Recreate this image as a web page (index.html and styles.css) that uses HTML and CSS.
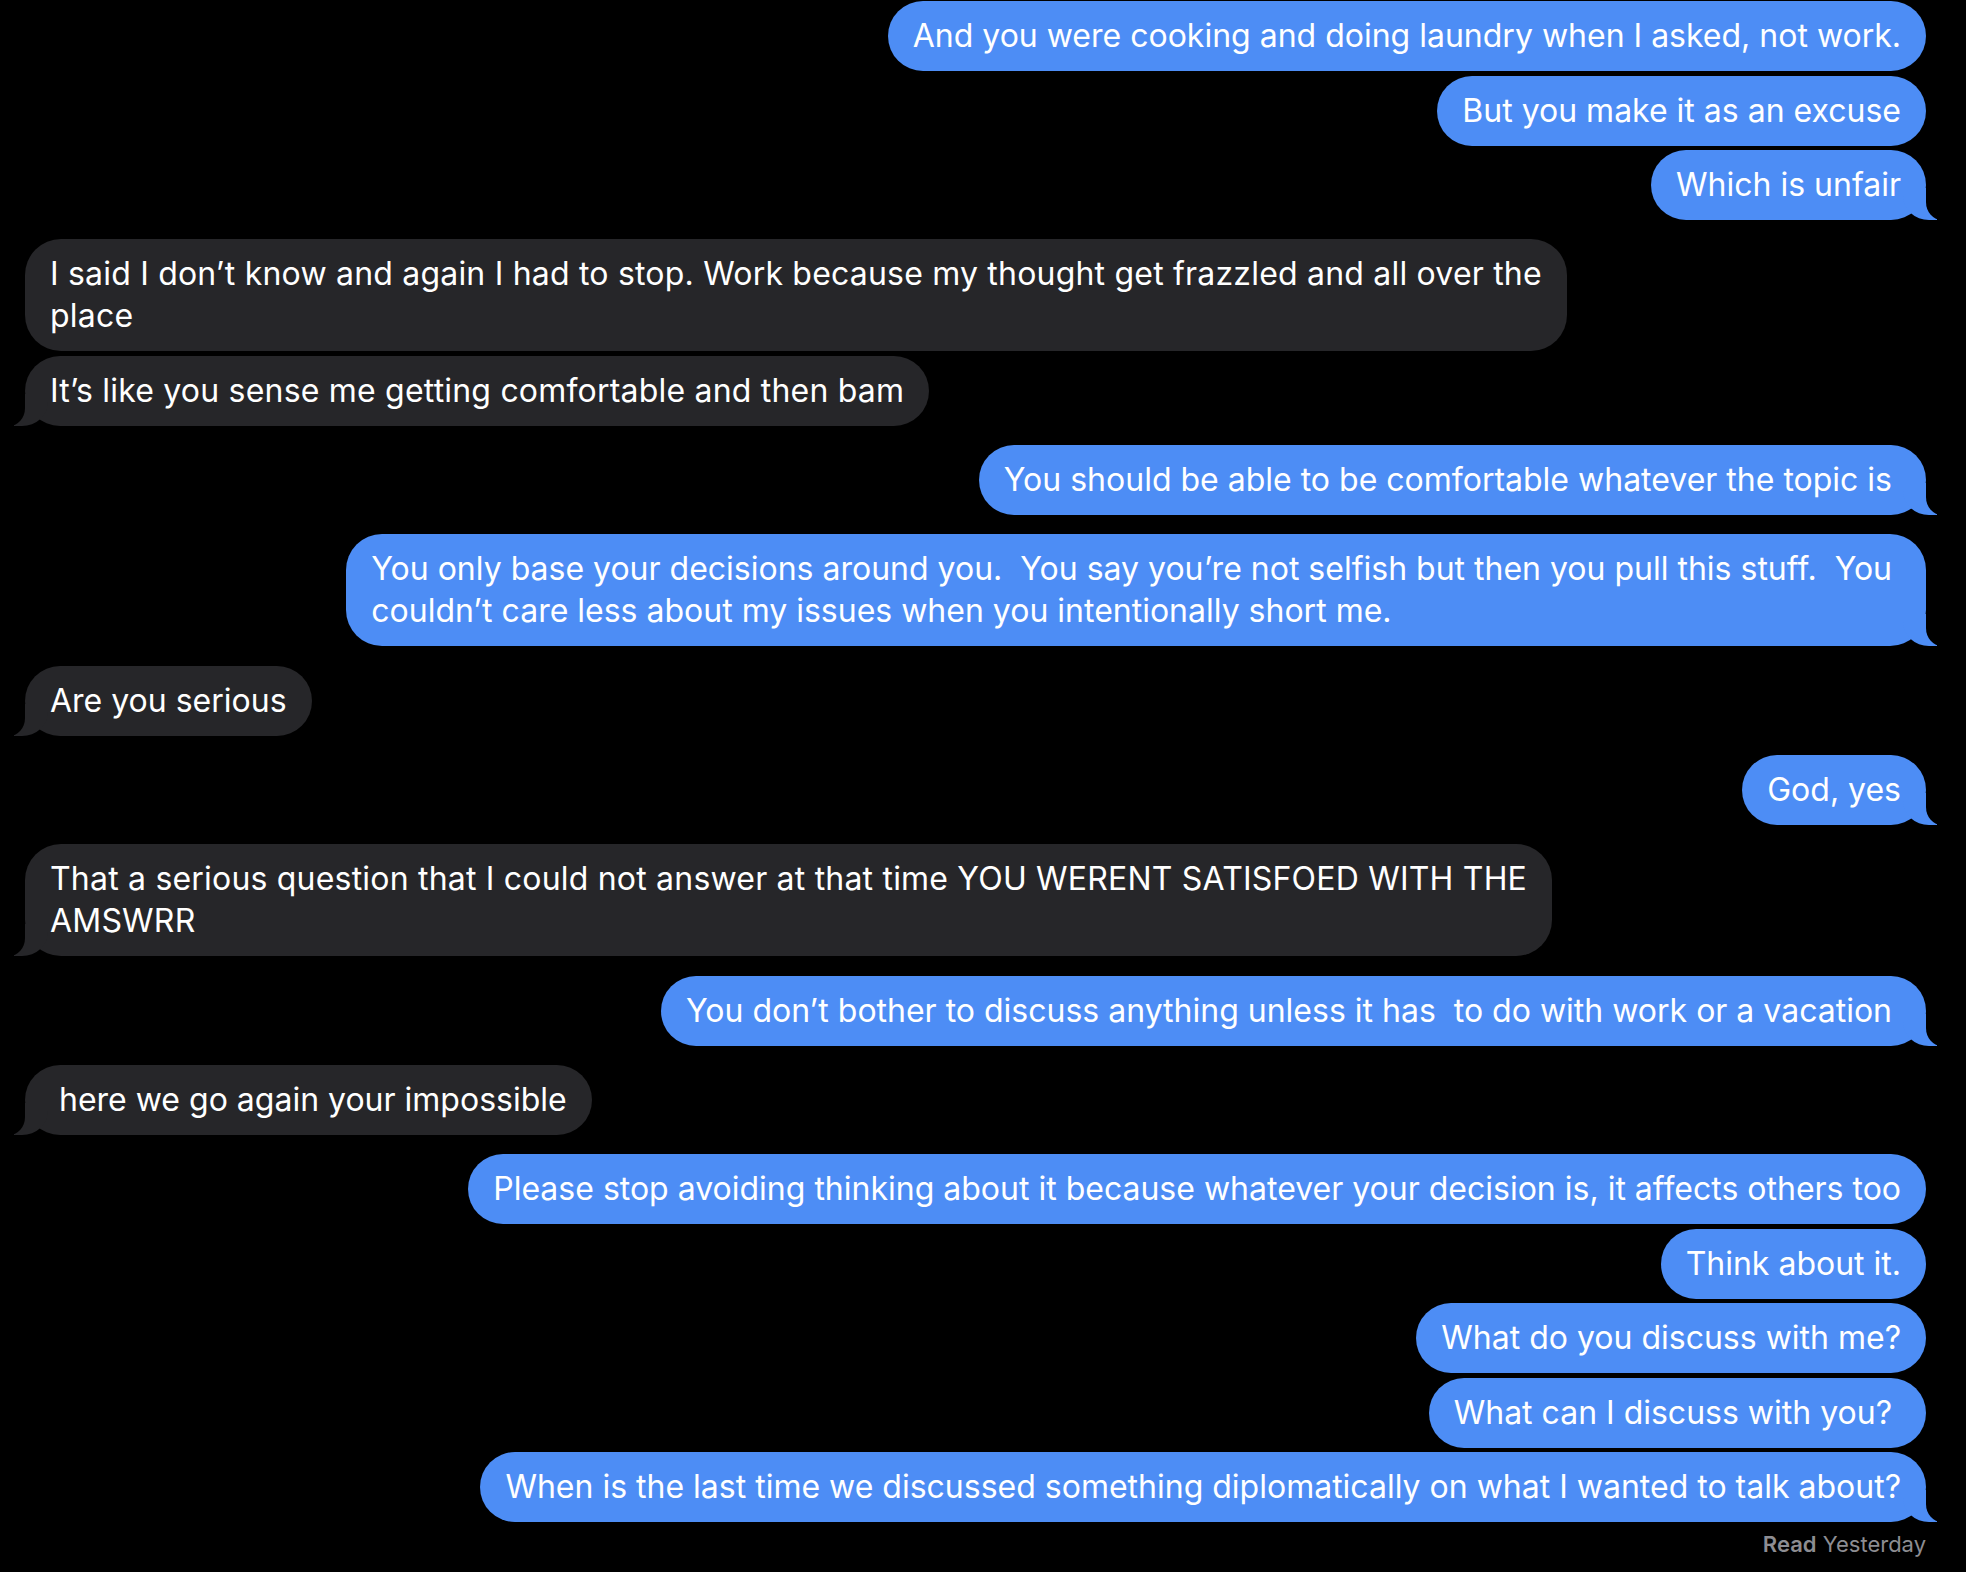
FILE: index.html
```html
<!DOCTYPE html>
<html>
<head>
<meta charset="utf-8">
<link rel="stylesheet" href="styles.css">
</head>
<body>
<main class="thread">
  <section class="group sent">
    <p class="bubble">And you were cooking and doing laundry when I asked, not work.</p>
    <p class="bubble">But you make it as an excuse</p>
    <p class="bubble tail">Which is unfair</p>
  </section>
  <section class="group recv">
    <p class="bubble wide">I said I don’t know and again I had to stop. Work because my thought get frazzled and all over the<br>place</p>
    <p class="bubble wide tail">It’s like you sense me getting comfortable and then bam</p>
  </section>
  <section class="group sent">
    <p class="bubble tail">You should be able to be comfortable whatever the topic is&nbsp;</p>
  </section>
  <section class="group sent">
    <p class="bubble tail">You only base your decisions around you.&nbsp; You say you’re not selfish but then you pull this stuff.&nbsp; You&nbsp;<br>couldn’t care less about my issues when you intentionally short me.</p>
  </section>
  <section class="group recv">
    <p class="bubble tail">Are you serious</p>
  </section>
  <section class="group sent">
    <p class="bubble tail">God, yes</p>
  </section>
  <section class="group recv">
    <p class="bubble wide tail">That a serious question that I could not answer at that time YOU WERENT SATISFOED WITH THE<br>AMSWRR</p>
  </section>
  <section class="group sent">
    <p class="bubble tail">You don’t bother to discuss anything unless it has&nbsp; to do with work or a vacation&nbsp;</p>
  </section>
  <section class="group recv">
    <p class="bubble tail">&nbsp;here we go again your impossible</p>
  </section>
  <section class="group sent">
    <p class="bubble">Please stop avoiding thinking about it because whatever your decision is, it affects others too</p>
    <p class="bubble">Think about it.</p>
    <p class="bubble">What do you discuss with me?</p>
    <p class="bubble">What can I discuss with you?&nbsp;</p>
    <p class="bubble tail">When is the last time we discussed something diplomatically on what I wanted to talk about?</p>
  </section>
  <footer class="receipt"><b>Read</b> Yesterday</footer>
</main>
</body>
</html>
```

FILE: styles.css
```css
html, body {
  margin: 0;
  padding: 0;
  background: #000;
}
body {
  font-family: "Inter", "Liberation Sans", sans-serif;
  color: #fff;
  width: 1966px;
  height: 1572px;
  overflow: hidden;
}
.thread {
  display: flex;
  flex-direction: column;
  gap: 19.3px;
  padding: 1px 40px 0 25px;
}
.group {
  display: flex;
  flex-direction: column;
  gap: 4.5px;
}
.group.sent { align-items: flex-end; }
.group.recv { align-items: flex-start; }
.bubble {
  position: relative;
  margin: 0;
  padding: 14px 25px;
  font-size: 32px;
  line-height: 42px;
  border-radius: 36px;
  white-space: nowrap;
}
.bubble.wide { letter-spacing: 0.2px; }
.sent .bubble { background: #4d8df5; }
.recv .bubble { background: #262629; }

.bubble.tail::before,
.bubble.tail::after {
  content: "";
  position: absolute;
  bottom: 0;
  height: 32px;
}
.sent .bubble.tail::before {
  right: -11px;
  width: 34px;
  background: #4d8df5;
  border-bottom-left-radius: 26px 24px;
}
.sent .bubble.tail::after {
  right: -26px;
  width: 26px;
  background: #000;
  border-bottom-left-radius: 16px 18px;
}
.recv .bubble.tail::before {
  left: -11px;
  width: 34px;
  background: #262629;
  border-bottom-right-radius: 26px 24px;
}
.recv .bubble.tail::after {
  left: -26px;
  width: 26px;
  background: #000;
  border-bottom-right-radius: 16px 18px;
}
.receipt {
  align-self: flex-end;
  margin-top: -10px;
  font-size: 22px;
  color: #8d8d92;
  font-family: "Inter", "Liberation Sans", sans-serif;
}
.receipt b { font-weight: 600; }
```
